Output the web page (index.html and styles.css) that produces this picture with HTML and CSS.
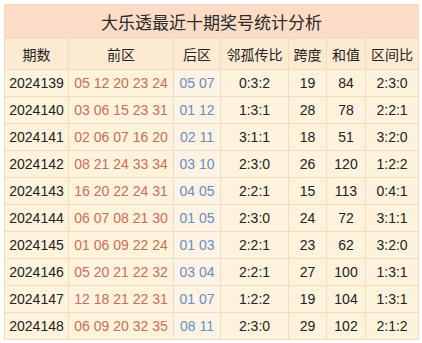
FILE: index.html
```html
<!DOCTYPE html>
<html lang="zh">
<head>
<meta charset="utf-8">
<link rel="stylesheet" href="styles.css">
</head>
<body>
<table class="stats">
  <colgroup>
    <col class="c-qi"><col class="c-front"><col class="c-back"><col class="c-lin"><col class="c-kd"><col class="c-hz"><col class="c-qj">
  </colgroup>
  <thead>
    <tr class="title-row"><th colspan="7">大乐透最近十期奖号统计分析</th></tr>
    <tr class="head-row"><th>期数</th><th>前区</th><th>后区</th><th>邻孤传比</th><th>跨度</th><th>和值</th><th>区间比</th></tr>
  </thead>
  <tbody>
    <tr><td>2024139</td><td class="front">05 12 20 23 24</td><td class="back">05 07</td><td>0:3:2</td><td>19</td><td>84</td><td>2:3:0</td></tr>
    <tr><td>2024140</td><td class="front">03 06 15 23 31</td><td class="back">01 12</td><td>1:3:1</td><td>28</td><td>78</td><td>2:2:1</td></tr>
    <tr><td>2024141</td><td class="front">02 06 07 16 20</td><td class="back">02 11</td><td>3:1:1</td><td>18</td><td>51</td><td>3:2:0</td></tr>
    <tr><td>2024142</td><td class="front">08 21 24 33 34</td><td class="back">03 10</td><td>2:3:0</td><td>26</td><td>120</td><td>1:2:2</td></tr>
    <tr><td>2024143</td><td class="front">16 20 22 24 31</td><td class="back">04 05</td><td>2:2:1</td><td>15</td><td>113</td><td>0:4:1</td></tr>
    <tr><td>2024144</td><td class="front">06 07 08 21 30</td><td class="back">01 05</td><td>2:3:0</td><td>24</td><td>72</td><td>3:1:1</td></tr>
    <tr><td>2024145</td><td class="front">01 06 09 22 24</td><td class="back">01 03</td><td>2:2:1</td><td>23</td><td>62</td><td>3:2:0</td></tr>
    <tr><td>2024146</td><td class="front">05 20 21 22 32</td><td class="back">03 04</td><td>2:2:1</td><td>27</td><td>100</td><td>1:3:1</td></tr>
    <tr><td>2024147</td><td class="front">12 18 21 22 31</td><td class="back">01 07</td><td>1:2:2</td><td>19</td><td>104</td><td>1:3:1</td></tr>
    <tr><td>2024148</td><td class="front">06 09 20 32 35</td><td class="back">08 11</td><td>2:3:0</td><td>29</td><td>102</td><td>2:1:2</td></tr>
  </tbody>
</table>
</body>
</html>
```
FILE: styles.css
```css
html, body {
  margin: 0;
  background: #ffffff;
}
body {
  padding: 4px 0 0 4px;
  font-family: "Liberation Sans", "Noto Sans CJK SC", sans-serif;
}
.stats {
  border-collapse: collapse;
  table-layout: fixed;
  width: 414px;
  background: #fdf2dc;
  color: #222222;
  font-size: 14px;
}
.c-qi { width: 64px; }
.c-front { width: 105px; }
.c-back { width: 47px; }
.c-lin { width: 68px; }
.c-kd { width: 38px; }
.c-hz { width: 39px; }
.c-qj { width: 53px; }
.stats th, .stats td {
  border: 1px solid #f1dcbd;
  text-align: center;
  padding: 0;
  font-weight: normal;
  white-space: nowrap;
}
.title-row th {
  height: 33px;
  background: #fbdcc7;
  font-size: 17px;
  color: #2a2a2a;
}
.head-row th {
  height: 30px;
  background: #fdead3;
  font-size: 14px;
}
.stats tbody td {
  height: 26px;
}
.front {
  color: #c66f58;
}
.back {
  color: #6a8ec0;
  background: #fcf3e4;
}
```
